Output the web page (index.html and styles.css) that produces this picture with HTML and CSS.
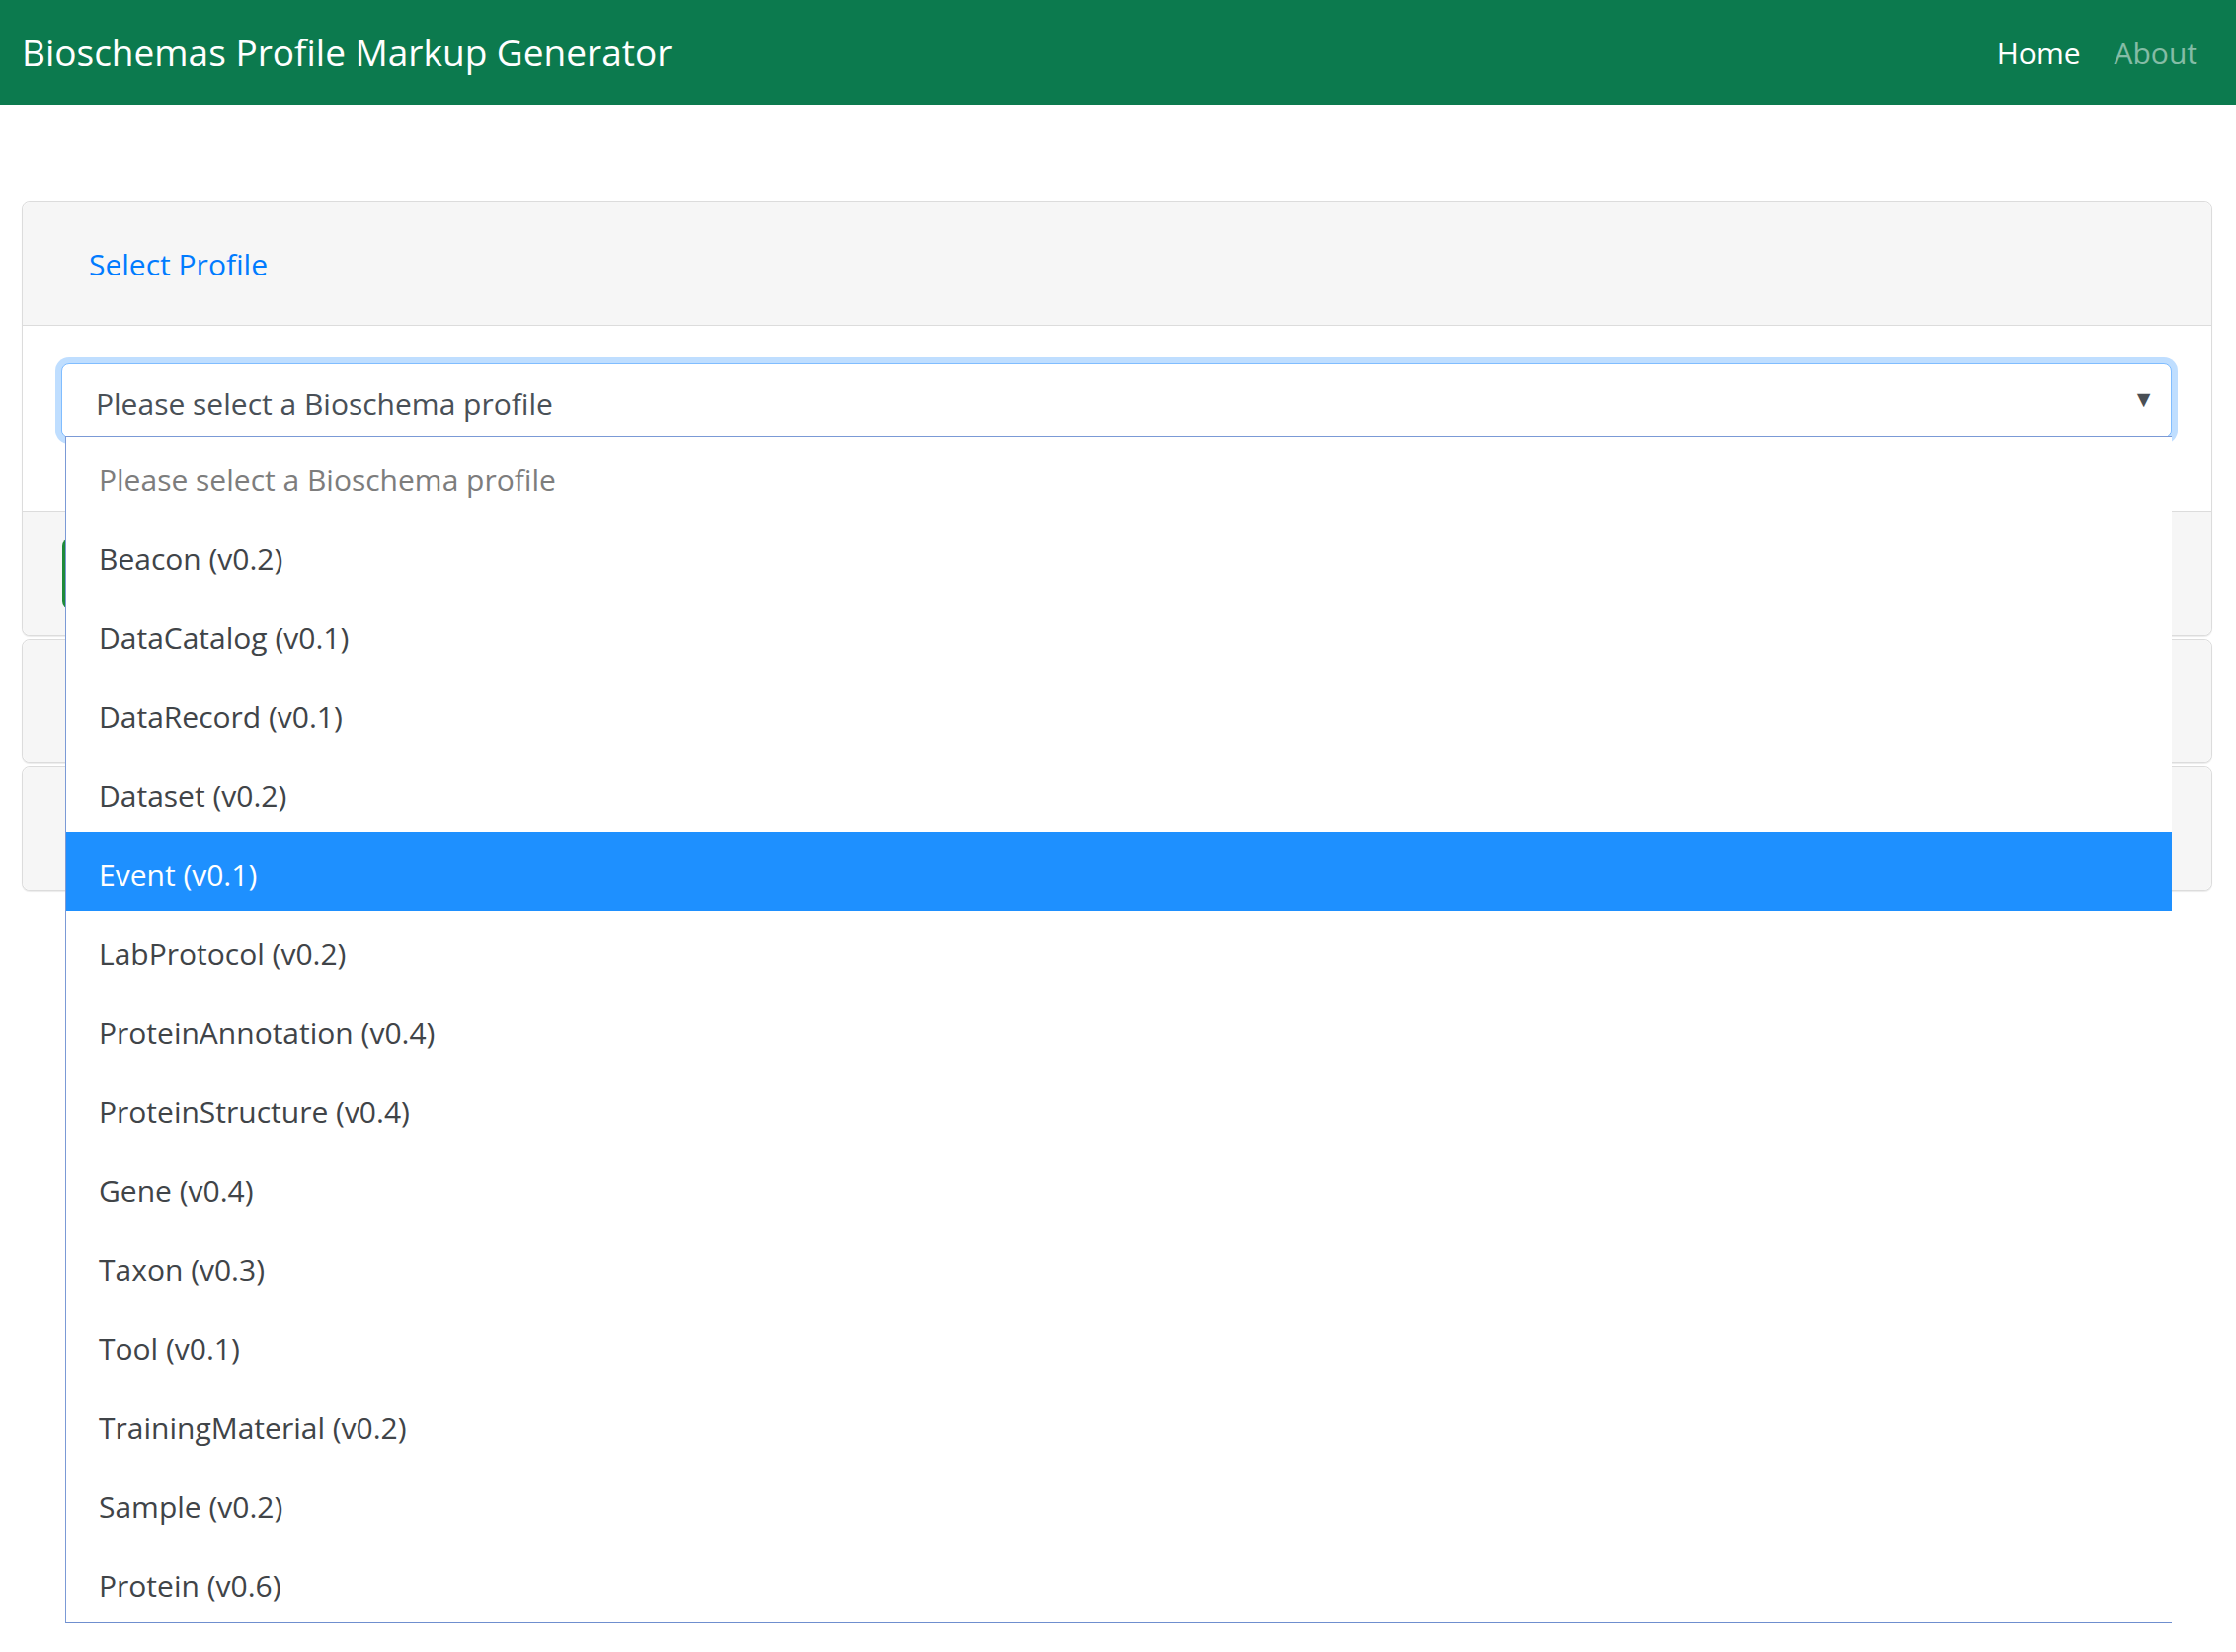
FILE: index.html
```html
<!DOCTYPE html>
<html lang="en">
<head>
<meta charset="utf-8">
<title>Bioschemas Profile Markup Generator</title>
<link rel="stylesheet" href="styles.css">
</head>
<body>
<nav class="navbar">
  <span class="brand">Bioschemas Profile Markup Generator</span>
  <ul class="nav">
    <li class="nav-link active">Home</li>
    <li class="nav-link">About</li>
  </ul>
</nav>
<main class="container">
  <section class="card">
    <div class="card-header"><span class="btn-link">Select Profile</span></div>
    <div class="card-body">
      <div class="select-wrap">
        <div class="select">
          <span class="select-value">Please select a Bioschema profile</span>
          <span class="select-arrow">&#9660;</span>
        </div>
        <ul class="dropdown">
          <li class="option placeholder">Please select a Bioschema profile</li>
          <li class="option">Beacon (v0.2)</li>
          <li class="option">DataCatalog (v0.1)</li>
          <li class="option">DataRecord (v0.1)</li>
          <li class="option">Dataset (v0.2)</li>
          <li class="option selected">Event (v0.1)</li>
          <li class="option">LabProtocol (v0.2)</li>
          <li class="option">ProteinAnnotation (v0.4)</li>
          <li class="option">ProteinStructure (v0.4)</li>
          <li class="option">Gene (v0.4)</li>
          <li class="option">Taxon (v0.3)</li>
          <li class="option">Tool (v0.1)</li>
          <li class="option">TrainingMaterial (v0.2)</li>
          <li class="option">Sample (v0.2)</li>
          <li class="option">Protein (v0.6)</li>
        </ul>
      </div>
    </div>
    <div class="card-footer"><span class="btn-success"></span></div>
  </section>
  <section class="card">
    <div class="card-header"></div>
  </section>
  <section class="card">
    <div class="card-header"></div>
  </section>
</main>
</body>
</html>
```
FILE: styles.css
```css
* { box-sizing: border-box; }
html, body { margin: 0; padding: 0; }
html { min-height: 1673px; }
body {
  min-height: 1673px;
  font-family: "Open Sans", "Noto Sans", "Liberation Sans", sans-serif;
  font-size: 30px;
  color: #495057;
  background: #fff;
}
.navbar {
  height: 106px;
  background: #0c7a4e;
  display: flex;
  align-items: center;
  justify-content: space-between;
  padding: 0 22px;
}
.brand {
  color: #fff;
  font-size: 37px;
  white-space: nowrap;
  margin-top: -2px;
}
.nav {
  list-style: none;
  margin: 0;
  padding: 0;
  display: flex;
}
.nav-link {
  padding: 0 16px;
  font-size: 30px;
  color: rgba(255,255,255,.5);
}
.nav-link:last-child { padding-right: 17px; }
.nav-link.active { color: #fff; padding-right: 18px; }

.container {
  padding: 98px 24px 0 22px;
  display: flex;
  flex-direction: column;
  gap: 3px;
}
.card {
  border: 1px solid #dcdcdc;
  border-radius: 8px;
  background: #fff;
  box-shadow: 0 1px 1px rgba(0,0,0,.08);
}
.card-header {
  height: 124px;
  background: #f6f6f6;
  border-radius: 8px;
  display: flex;
  align-items: center;
  padding-left: 67px;
}
.card:first-child .card-header {
  border-radius: 8px 8px 0 0;
  border-bottom: 1px solid #dcdcdc;
  height: 125px;
}
.btn-link {
  color: #007bff;
  font-size: 30px;
}
.card-body {
  padding: 38px 40px 74px 39px;
}
.select-wrap {
  position: relative;
  z-index: 5;
}
.select {
  height: 76px;
  border: 1px solid #80bdff;
  border-radius: 8px;
  box-shadow: 0 0 0 6px rgba(0,123,255,.25);
  display: flex;
  align-items: center;
  justify-content: space-between;
  padding: 4px 16px 0 34px;
  background: #fff;
}
.select-value {
  color: #495057;
}
.select-arrow {
  font-size: 23px;
  color: #4a4f55;
  margin-top: -10px;
}
.dropdown {
  position: absolute;
  top: 74px;
  left: 4px;
  right: 0;
  margin: 0;
  padding: 0;
  list-style: none;
  background: #fff;
  border-left: 1px solid #7b9ad6;
  border-bottom: 1px solid #6f8fcf;
  border-top: 1px solid #7b9ad6;
}
.option {
  height: 80px;
  line-height: 80px;
  padding: 3px 0 0 33px;
  color: #404448;
  white-space: nowrap;
}
.option.placeholder { color: #7d7d7d; }
.option.selected {
  background: #1e90ff;
  color: #fff;
}
.card-footer {
  height: 125px;
  background: #f6f6f6;
  border-top: 1px solid #dcdcdc;
  border-radius: 0 0 8px 8px;
  display: flex;
  align-items: center;
  padding-left: 40px;
}
.btn-success {
  display: block;
  width: 220px;
  height: 72px;
  background: #1e8a3a;
  border-radius: 8px;
}
```
